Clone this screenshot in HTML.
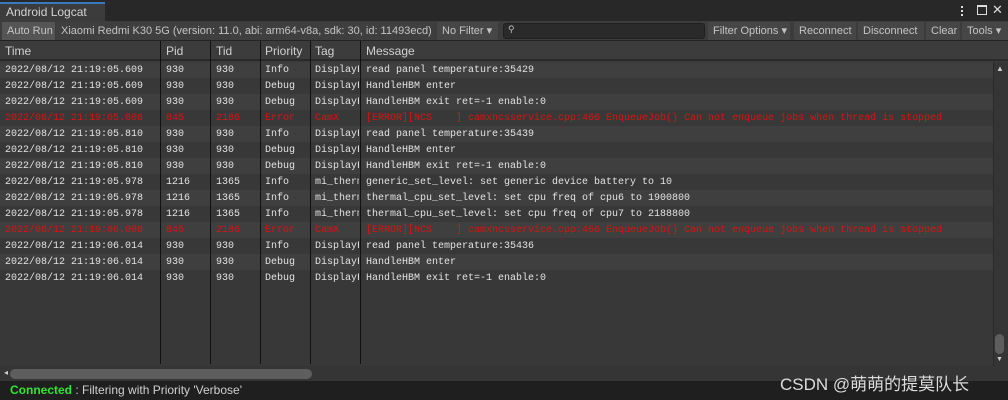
<!DOCTYPE html>
<html><head><style>
*{margin:0;padding:0;box-sizing:border-box}
body{width:1008px;height:400px;background:#383838;font-family:"Liberation Sans",sans-serif;color:#c4c4c4;position:relative;overflow:hidden}
.abs{position:absolute}
#title{left:0;top:0;width:1008px;height:21px;background:#282828}
#tab{left:0;top:2px;width:105px;height:19px;background:#3c3c3c;border-top:2px solid #3a79bb;font-size:12px;color:#d2d2d2;padding:1px 0 0 6px}
#tb{left:0;top:21px;width:1008px;height:20px;background:#3c3c3c;border-bottom:1px solid #232323}
.btn{position:absolute;top:22px;height:18px;background:#464646;font-size:11px;color:#c4c4c4;line-height:19px;padding-left:5px;white-space:nowrap;overflow:hidden}
#hdr{left:0;top:41px;width:1008px;height:20px;background:#3c3c3c;border-bottom:2px solid #2a2a2a;font-size:12px;color:#d0d0d0}
#hdr span{position:absolute;top:3px}
.row{position:absolute;left:0;width:993px;height:16px;font-family:"Liberation Mono",monospace;font-size:10px;line-height:18px;color:#e2e2e2;white-space:nowrap}
.row span{position:absolute;overflow:hidden}
.r{color:#e01010}
.vl{position:absolute;top:41px;width:1px;height:323px;background:#111}
</style></head><body>
<div id="title" class="abs"></div>
<div id="tab" class="abs">Android Logcat</div>
<div class="abs" style="left:961px;top:6px;width:2px;height:2px;background:#ddd;box-shadow:0 4px 0 #ddd,0 8px 0 #ddd"></div>
<div class="abs" style="left:977px;top:5px;width:10px;height:10px;border:1px solid #ddd;border-top-width:2px"></div>
<div class="abs" style="left:992px;top:2px;font-size:13px;color:#ddd">✕</div>
<div id="tb" class="abs"></div>
<div class="btn" style="left:2px;width:53px;background:#555">Auto Run</div>
<div class="btn" style="left:56px;width:377px;background:#3f3f3f">Xiaomi Redmi K30 5G (version: 11.0, abi: arm64-v8a, sdk: 30, id: 11493ecd) ▾</div>
<div class="btn" style="left:437px;width:61px">No Filter ▾</div>
<div class="abs" style="left:503px;top:23px;width:202px;height:16px;background:#2a2a2a;border:1px solid #202020;border-radius:3px;font-size:9px;color:#bbb;padding-left:4px">⚲</div>
<div class="btn" style="left:708px;width:82px">Filter Options ▾</div>
<div class="btn" style="left:794px;width:62px">Reconnect</div>
<div class="btn" style="left:858px;width:66px">Disconnect</div>
<div class="btn" style="left:926px;width:34px">Clear</div>
<div class="btn" style="left:962px;width:46px">Tools ▾</div>
<div id="hdr" class="abs"><span style="left:5px">Time</span><span style="left:166px">Pid</span><span style="left:216px">Tid</span><span style="left:265px">Priority</span><span style="left:315px">Tag</span><span style="left:366px">Message</span></div>
<div id="rows"></div>
<div class="vl" style="left:160px"></div><div class="vl" style="left:210px"></div><div class="vl" style="left:260px"></div><div class="vl" style="left:310px"></div><div class="vl" style="left:360px"></div>
<div class="abs" style="left:993px;top:62px;width:15px;height:304px;background:#353535;border-left:1px solid #2a2a2a"></div>
<div class="abs" style="left:996px;top:64px;font-size:8px;color:#ccc">▲</div>
<div class="abs" style="left:995px;top:334px;width:9px;height:20px;background:#5e5e5e;border-radius:5px"></div>
<div class="abs" style="left:996px;top:356px;font-size:7px;color:#ccc">▼</div>
<div class="abs" style="left:0;top:366px;width:1008px;height:15px;background:#353535"></div>
<div class="abs" style="left:4px;top:368px;font-size:8px;color:#ccc">◂</div>
<div class="abs" style="left:10px;top:369px;width:302px;height:10px;background:#5e5e5e;border-radius:5px"></div>
<div class="abs" style="left:0;top:381px;width:1008px;height:19px;background:#1f1f1f;font-size:12px;padding:2px 0 0 10px;color:#d0d0d0"><b style="color:#2fe52f">Connected</b> : Filtering with Priority 'Verbose'</div>
<div class="abs" style="left:780px;top:370px;font-size:17px;color:#dcdcdc;font-family:'Liberation Sans','Noto Sans CJK SC',sans-serif">CSDN @萌萌的提莫队长</div>
<script>
var d=[["2022/08/12 21:19:05.609","930","930","Info","DisplayFeature","read panel temperature:35429"],
["2022/08/12 21:19:05.609","930","930","Debug","DisplayFeature","HandleHBM enter"],
["2022/08/12 21:19:05.609","930","930","Debug","DisplayFeature","HandleHBM exit ret=-1 enable:0"],
["2022/08/12 21:19:05.808","845","2186","Error","CamX","[ERROR][NCS    ] camxncsservice.cpp:466 EnqueueJob() Can not enqueue jobs when thread is stopped",1],
["2022/08/12 21:19:05.810","930","930","Info","DisplayFeature","read panel temperature:35439"],
["2022/08/12 21:19:05.810","930","930","Debug","DisplayFeature","HandleHBM enter"],
["2022/08/12 21:19:05.810","930","930","Debug","DisplayFeature","HandleHBM exit ret=-1 enable:0"],
["2022/08/12 21:19:05.978","1216","1365","Info","mi_thermald","generic_set_level: set generic device battery to 10"],
["2022/08/12 21:19:05.978","1216","1365","Info","mi_thermald","thermal_cpu_set_level: set cpu freq of cpu6 to 1900800"],
["2022/08/12 21:19:05.978","1216","1365","Info","mi_thermald","thermal_cpu_set_level: set cpu freq of cpu7 to 2188800"],
["2022/08/12 21:19:06.008","845","2186","Error","CamX","[ERROR][NCS    ] camxncsservice.cpp:466 EnqueueJob() Can not enqueue jobs when thread is stopped",1],
["2022/08/12 21:19:06.014","930","930","Info","DisplayFeature","read panel temperature:35436"],
["2022/08/12 21:19:06.014","930","930","Debug","DisplayFeature","HandleHBM enter"],
["2022/08/12 21:19:06.014","930","930","Debug","DisplayFeature","HandleHBM exit ret=-1 enable:0"]];
var L=[[5,155],[166,44],[216,44],[265,44],[315,44],[366,630]],h="";
d.forEach(function(r,i){h+='<div class="row'+(r[6]?' r':'')+'" style="top:'+(62+i*16)+'px;background:'+(i%2?'#383838':'#3f3f3f')+'">';
for(var j=0;j<6;j++)h+='<span style="left:'+L[j][0]+'px;width:'+L[j][1]+'px">'+r[j].replace(/ /g,'&nbsp;')+'</span>';h+='</div>';});
document.getElementById('rows').innerHTML=h;
</script>
</body></html>
